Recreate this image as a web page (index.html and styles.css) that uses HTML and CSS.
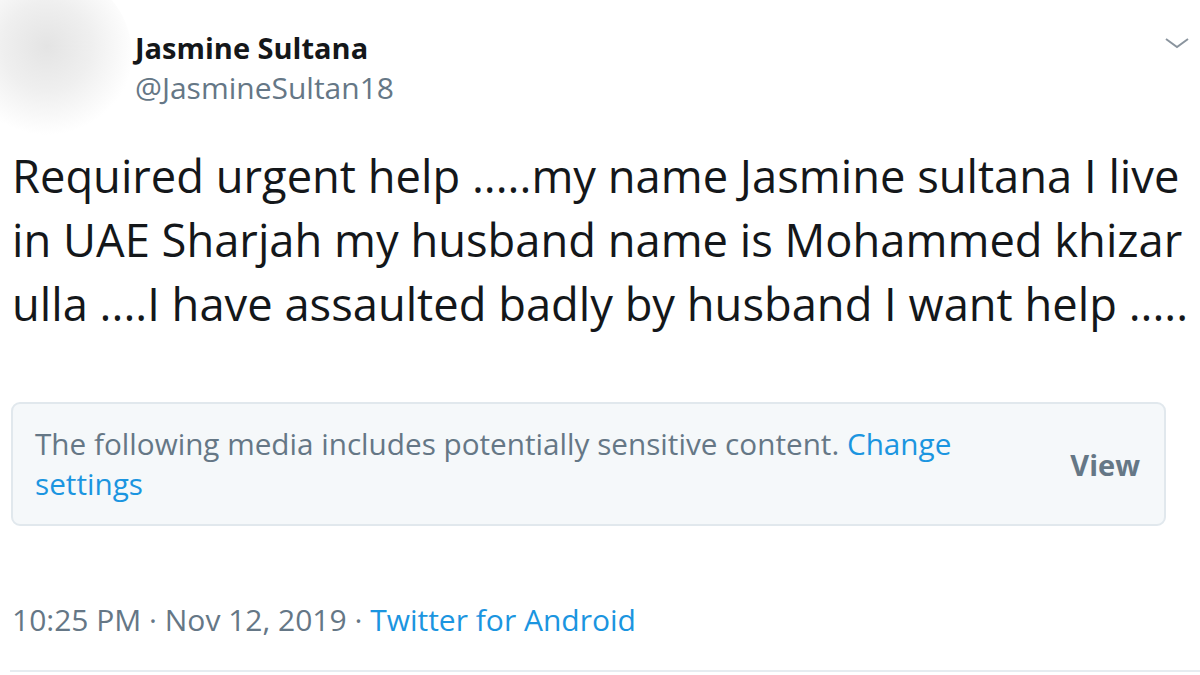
FILE: index.html
```html
<!DOCTYPE html>
<html>
<head>
<meta charset="utf-8">
<link rel="stylesheet" href="styles.css">
</head>
<body>
<div class="tweet">
  <div class="header">
    <div class="avatar"></div>
    <div class="names">
      <div class="name">Jasmine Sultana</div>
      <div class="handle">@JasmineSultan18</div>
    </div>
    <svg class="chev" width="26" height="12" viewBox="0 0 26 12"><path d="M2 2 L13 10 L24 2" fill="none" stroke="#8a949e" stroke-width="2"/></svg>
  </div>
  <div class="text">Required urgent help .....my name Jasmine sultana I live<br>in UAE Sharjah my husband name is Mohammed khizar<br>ulla ....I have assaulted badly by husband I want help .....</div>
  <div class="sensitive">
    <div class="msg">The following media includes potentially sensitive content. <span class="link">Change</span> <span class="link">settings</span></div>
    <div class="view">View</div>
  </div>
  <div class="meta">10:25 PM · Nov 12, 2019 · <span class="link">Twitter for Android</span></div>
  <div class="rule"></div>
</div>
</body>
</html>
```
FILE: styles.css
```css
html, body { margin: 0; padding: 0; background: #fff; }
body { width: 1200px; height: 675px; overflow: hidden; font-family: "Open Sans", "Noto Sans", sans-serif; }
.tweet { padding: 0 0 0 12px; }
.header { display: flex; position: relative; height: 128px; }
.avatar { position: absolute; left: -50px; top: -30px; width: 170px; height: 170px; border-radius: 50%; background: radial-gradient(circle at 50% 45%, #e4e4e4 0%, #efefef 35%, #ffffff 70%); }
.names { position: relative; margin-left: 123px; padding-top: 30px; }
.name { font-weight: 700; font-size: 29px; color: #14171a; line-height: 36px; }
.handle { font-size: 30px; color: #657786; line-height: 44px; }
.chev { position: absolute; right: 10px; top: 37px; }
.text { font-size: 45.3px; line-height: 64px; color: #14171a; margin-top: 16px; white-space: nowrap; }
.sensitive { box-sizing: border-box; display: flex; align-items: center; width: 1155px; margin: 66px 0 0 -1px; padding: 20px 24px 20px 22px; background: #f5f8fa; border: 2px solid #e1e8ed; border-radius: 9px; }
.msg { flex: 0 0 930px; font-size: 29.7px; line-height: 40px; color: #657786; }
.link { color: #1b95e0; }
.view { margin-left: auto; font-weight: 700; font-size: 29px; color: #657786; }
.meta { font-size: 30px; color: #657786; margin-top: 74px; line-height: 40px; }
.rule { height: 2px; background: #e6ecf0; margin: 30px 0 0 -2px; }
```
